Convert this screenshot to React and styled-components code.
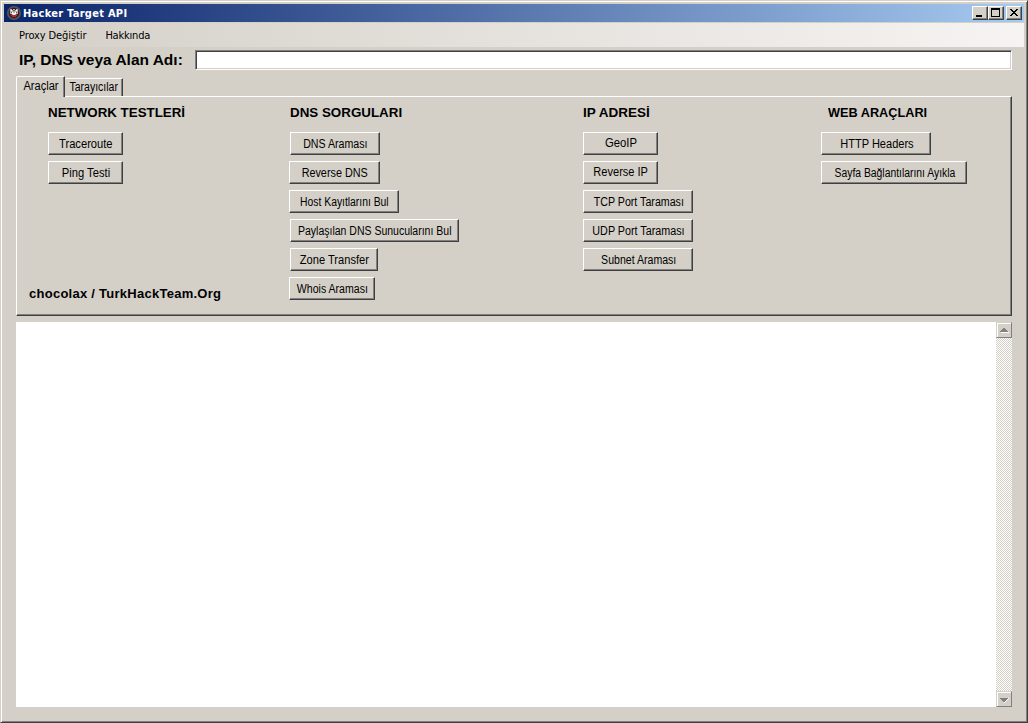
import React from "react";
import styled, { createGlobalStyle } from "styled-components";

const face = "#d4d0c8";
const shade = "#808080";
const dark = "#404040";

const Global = createGlobalStyle`
  * { box-sizing: border-box; }
  html, body { margin: 0; padding: 0; }
  body { overflow: hidden; background: ${face}; }
`;

const Frame = styled.div`
  width: 1028px;
  height: 723px;
  padding: 3px 3px 2px 3px;
  display: flex;
  flex-direction: column;
  background: ${face};
  border: 1px solid;
  border-color: ${face} ${dark} ${dark} ${face};
  box-shadow: inset 1px 1px 0 #fff, inset -1px -1px 0 ${shade};
  color: #000;
  font-family: "Liberation Sans", Arial, sans-serif;
  font-size: 12px;
`;

const TitleBar = styled.header`
  height: 18px;
  display: flex;
  align-items: center;
  padding: 0 2px 0 2px;
  background: linear-gradient(90deg, #0a246a, #a6caf0);
`;

const Title = styled.h1`
  margin: 0 auto 0 1px;
  padding-top: 1px;
  color: #fff;
  font: bold 11px/17px "DejaVu Sans Condensed", Tahoma, sans-serif;
  letter-spacing: 0.28px;
  white-space: nowrap;
`;

const AppIcon = styled.svg`
  width: 16px;
  height: 16px;
`;

const CaptionButton = styled.button`
  width: 16px;
  height: 14px;
  padding: 0;
  margin-left: ${(p) => p.$gap || 0}px;
  display: block;
  background: ${face};
  border: 1px solid;
  border-color: #fff ${dark} ${dark} #fff;
  box-shadow: inset -1px -1px 0 ${shade};

  svg { display: block; width: 14px; height: 12px; }
`;

const MenuBar = styled.nav`
  height: 24px;
  margin-top: 1px;
  padding: 1px 0 0 15px;
  display: flex;
  gap: 19px;
  background: linear-gradient(90deg, ${face}, #f5f4f2);
`;

const MenuItem = styled.span`
  font: 11px/23px "DejaVu Sans Condensed", Tahoma, sans-serif;
  letter-spacing: ${(p) => p.$spacing}px;
  white-space: nowrap;
`;

const Client = styled.main`
  flex: 1;
  min-height: 0;
  padding: 3px 12px 13px 12px;
  display: flex;
  flex-direction: column;
`;

const TargetRow = styled.label`
  height: 20px;
  flex: none;
  display: flex;
  padding-left: 3px;
`;

const TargetLabel = styled.span`
  width: 176px;
  font-weight: bold;
  font-size: 14px;
  line-height: 20px;
  white-space: nowrap;

  span { display: inline-block; transform: scaleX(1.106); transform-origin: 0 50%; }
`;

const TargetInput = styled.input`
  flex: 1;
  height: 20px;
  min-width: 0;
  padding: 1px 4px;
  background: #fff;
  outline: none;
  border: 1px solid;
  border-color: ${shade} #fff #fff ${shade};
  box-shadow: inset 1px 1px 0 ${dark}, inset -1px -1px 0 ${face};
`;

const TabStrip = styled.div`
  flex: none;
  height: 26px;
  display: flex;
  align-items: flex-end;
`;

const Tab = styled.button`
  position: relative;
  z-index: ${(p) => (p.$active ? 1 : 0)};
  width: ${(p) => (p.$active ? 49 : 58)}px;
  height: ${(p) => (p.$active ? 21 : 18)}px;
  margin-bottom: ${(p) => (p.$active ? -1 : 0)}px;
  padding: 0 0 ${(p) => (p.$active ? 1 : 0)}px 1px;
  background: ${face};
  border: solid;
  border-width: 1px 1px 0 ${(p) => (p.$active ? 1 : 0)}px;
  border-color: #fff ${dark} ${face} #fff;
  border-radius: 2px 1px 0 0;
  box-shadow: inset -1px 0 0 ${shade};
  font: 12px/17px "Liberation Sans", Arial, sans-serif;
  color: #000;
  text-align: center;
`;

const Fitted = styled.span`
  display: inline-block;
  margin: 0 -20px;
  white-space: nowrap;
  transform: scaleX(${(p) => p.$scale});
`;

const Panel = styled.section`
  flex: none;
  height: 220px;
  padding: 8px 2px 12px 12px;
  display: grid;
  grid-template-columns: 260px 294px 238px 1fr;
  background: ${face};
  border: 1px solid;
  border-color: #fff ${dark} ${dark} #fff;
  box-shadow: inset -1px -1px 0 ${shade};
`;

const Column = styled.div`
  display: flex;
  flex-direction: column;
  align-items: flex-start;
  padding-left: ${(p) => p.$indent || 0}px;
`;

const Heading = styled.h2`
  margin: 0 0 11px ${(p) => p.$indent || 0}px;
  font-size: 13px;
  line-height: 16px;
  font-weight: bold;
  white-space: nowrap;
  transform: scaleX(${(p) => p.$scale});
  transform-origin: 0 50%;
`;

const Credit = styled.p`
  margin: auto 0 5px -19px;
  font-size: 13px;
  line-height: 15px;
  font-weight: bold;
  letter-spacing: 0.26px;
  white-space: nowrap;
`;

const ToolButton = styled.button`
  width: ${(p) => p.$width}px;
  height: 23px;
  margin: 0 0 6px ${(p) => p.$inset || 0}px;
  padding: ${(p) => (p.$raised ? "0 0 1px 1px" : "1px 0 0 1px")};
  background: ${face};
  border: 1px solid;
  border-color: #fff ${dark} ${dark} #fff;
  box-shadow: inset -1px -1px 0 ${shade};
  font: 12px/20px "Liberation Sans", Arial, sans-serif;
  color: #000;
  text-align: center;
`;

const Output = styled.section`
  flex: 1;
  min-height: 0;
  margin-top: 6px;
  display: flex;
  justify-content: flex-end;
  background: #fff;
`;

const ScrollBar = styled.div`
  width: 16px;
  display: flex;
  flex-direction: column;
  justify-content: space-between;
  background: repeating-conic-gradient(#fff 0 25%, ${face} 0 50%) 0 0 / 2px 2px;
`;

const ScrollArrow = styled.button`
  width: 16px;
  height: 16px;
  padding: 0;
  background: ${face};
  border: 1px solid;
  border-color: ${face} ${shade} ${shade} ${face};
  box-shadow: inset 1px 1px 0 #fff;

  svg { display: block; width: 14px; height: 14px; }
`;

const columns = [
  {
    title: "NETWORK TESTLERİ", scale: 1.026, indent: 19, credit: true,
    tools: [
      { label: "Traceroute", width: 75, scale: 0.93 },
      { label: "Ping Testi", width: 75, scale: 0.935 },
    ],
  },
  {
    title: "DNS SORGULARI", scale: 1.028, titleIndent: 1,
    tools: [
      { label: "DNS Araması", width: 90, scale: 0.886, inset: 1 },
      { label: "Reverse DNS", width: 91, scale: 0.9 },
      { label: "Host Kayıtlarını Bul", width: 110, scale: 0.862 },
      { label: "Paylaşılan DNS Sunucularını Bul", width: 169, scale: 0.875, inset: 1 },
      { label: "Zone Transfer", width: 88, scale: 0.925, inset: 1 },
      { label: "Whois Araması", width: 86, scale: 0.88 },
    ],
  },
  {
    title: "IP ADRESİ", scale: 1.04,
    tools: [
      { label: "GeoIP", width: 75, scale: 0.941, raised: true },
      { label: "Reverse IP", width: 75, scale: 0.92, raised: true },
      { label: "TCP Port Taraması", width: 110, scale: 0.888 },
      { label: "UDP Port Taraması", width: 110, scale: 0.896 },
      { label: "Subnet Araması", width: 110, scale: 0.88 },
    ],
  },
  {
    title: "WEB ARAÇLARI", scale: 0.978, titleIndent: 7,
    tools: [
      { label: "HTTP Headers", width: 110, scale: 0.92 },
      { label: "Sayfa Bağlantılarını Ayıkla", width: 146, scale: 0.864 },
    ],
  },
];

function Logo() {
  return (
    <AppIcon viewBox="0 0 16 16" shapeRendering="crispEdges">
      <circle cx="8" cy="8" r="7" fill="#5a5456" shapeRendering="auto" />
      <circle cx="8" cy="8" r="5.4" fill="#2c2628" shapeRendering="auto" />
      <path d="M4 4h2v1h1V4h2v1h1V4h2v5h-1v1H5V9H4z" fill="#b5b1b4" />
      <path d="M5 5h1v1H5zM10 5h1v1h-1zM6 7h1v2H6zM9 7h1v2H9z" fill="#fff" />
      <path d="M7 5h2v1H7zM5 7h1v1H5zM10 7h1v1h-1z" fill="#74504f" />
      <path d="M5 9h1v1h4V9h1v2h-1v1H6v-1H5z" fill="#c4202c" />
      <path d="M7 8h2v2H7z" fill="#eee" />
    </AppIcon>
  );
}

export default function App() {
  return (
    <>
      <Global />
      <Frame>
        <TitleBar>
          <Logo />
          <Title>Hacker Target API</Title>
          <CaptionButton aria-label="Minimize">
            <svg viewBox="0 0 14 12" shapeRendering="crispEdges"><path d="M3 8h6v2H3z" /></svg>
          </CaptionButton>
          <CaptionButton aria-label="Maximize">
            <svg viewBox="0 0 14 12" shapeRendering="crispEdges">
              <path fillRule="evenodd" d="M2 1h9v9H2zM3 3v6h7V3z" />
            </svg>
          </CaptionButton>
          <CaptionButton aria-label="Close" $gap={2}>
            <svg viewBox="0 0 14 12" shapeRendering="crispEdges">
              <path d="M3 2h2v1h1v1h2V3h1V2h2v1h-1v1H9v1H8v1h1v1h1v1h1v1H9V8H8V7H6v1H5v1H3V8h1V7h1V6h1V5H5V4H4V3H3z" />
            </svg>
          </CaptionButton>
        </TitleBar>
        <MenuBar>
          <MenuItem $spacing={-0.1}>Proxy Değiştir</MenuItem>
          <MenuItem $spacing={-0.2}>Hakkında</MenuItem>
        </MenuBar>
        <Client>
          <TargetRow>
            <TargetLabel><span>IP, DNS veya Alan Adı:</span></TargetLabel>
            <TargetInput />
          </TargetRow>
          <TabStrip>
            <Tab $active><Fitted $scale={0.921}>Araçlar</Fitted></Tab>
            <Tab><Fitted $scale={0.875}>Tarayıcılar</Fitted></Tab>
          </TabStrip>
          <Panel>
            {columns.map((c) => (
              <Column key={c.title} $indent={c.indent}>
                <Heading $scale={c.scale} $indent={c.titleIndent}>{c.title}</Heading>
                {c.tools.map((t) => (
                  <ToolButton key={t.label} $width={t.width} $inset={t.inset} $raised={t.raised}>
                    <Fitted $scale={t.scale}>{t.label}</Fitted>
                  </ToolButton>
                ))}
                {c.credit && <Credit>chocolax / TurkHackTeam.Org</Credit>}
              </Column>
            ))}
          </Panel>
          <Output>
            <ScrollBar>
              <ScrollArrow aria-label="Up">
                <svg viewBox="0 0 14 14" shapeRendering="crispEdges">
                  <path d="M4 9h8v1H4z" fill="#fff" />
                  <path d="M6 5h2v1h1v1h1v1h1v1H3V8h1V7h1V6h1z" fill={shade} />
                </svg>
              </ScrollArrow>
              <ScrollArrow aria-label="Down">
                <svg viewBox="0 0 14 14" shapeRendering="crispEdges">
                  <path d="M11 6h1v1h-1v1h-1v1H9v1H8v1H7V9h1V8h1V7h1V6z" fill="#fff" />
                  <path d="M3 6h8v1h-1v1H9v1H8v1H6V9H5V8H4V7H3z" fill={shade} />
                </svg>
              </ScrollArrow>
            </ScrollBar>
          </Output>
        </Client>
      </Frame>
    </>
  );
}
